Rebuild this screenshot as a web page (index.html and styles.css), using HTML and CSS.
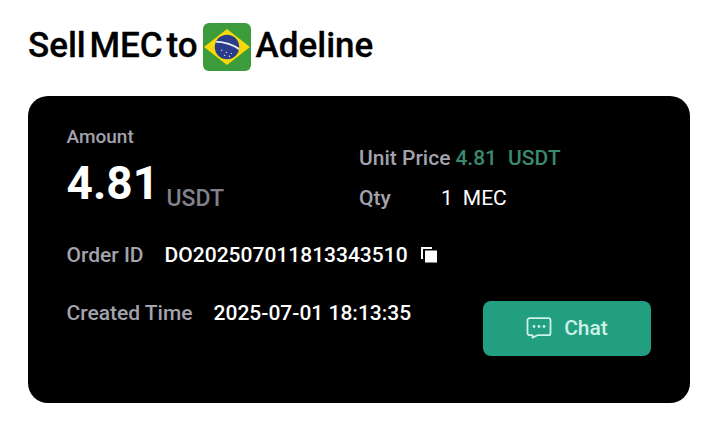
FILE: index.html
```html
<!DOCTYPE html>
<html lang="en">
<head>
<meta charset="utf-8">
<title>Sell MEC</title>
<link rel="stylesheet" href="styles.css">
</head>
<body>
<h1 class="title">
  <span class="title-text">Sell MEC to</span>
  <svg class="flag" viewBox="0 0 49 49" width="48" height="48" aria-hidden="true">
    <defs><clipPath id="globe"><circle cx="24.5" cy="24.5" r="12.5"/></clipPath></defs>
    <rect width="49" height="49" rx="6" fill="#3c9b3a"/>
    <path d="M1 24.5 24.5 6 48 24.5 24.5 43Z" fill="#f5d90a"/>
    <circle cx="24.5" cy="24.5" r="12.5" fill="#2a3c8c"/>
    <g clip-path="url(#globe)"><path d="M10 19C20 19 30 21 39 28" fill="none" stroke="#e8eef2" stroke-width="2"/></g>
    <g fill="#dfe6f2"><circle cx="19" cy="28" r=".7"/><circle cx="24" cy="30" r=".7"/><circle cx="29" cy="31" r=".7"/><circle cx="22" cy="33" r=".7"/><circle cx="27" cy="34" r=".7"/></g>
  </svg>
  <span class="title-text">Adeline</span>
</h1>
<main class="card">
  <div class="top">
    <div class="amount">
      <div class="label amount-label">Amount</div>
      <div class="amount-value"><span class="big">4.81</span><span class="unit">USDT</span></div>
    </div>
    <div class="price">
      <div class="price-row"><span class="label">Unit Price</span><span class="green">4.81</span><span class="green">USDT</span></div>
      <div class="qty-row"><span class="label qty-label">Qty</span><span>1</span><span>MEC</span></div>
    </div>
  </div>
  <div class="order">
    <span class="label">Order ID</span>
    <span class="value">DO202507011813343510</span>
    <svg class="copy" viewBox="0 0 16 16" width="16" height="16" aria-hidden="true">
      <path d="M0 0h11v2H2v10H0Z" fill="#fff"/>
      <rect x="4" y="3.5" width="12" height="12" fill="#fff"/>
    </svg>
  </div>
  <div class="bottom">
    <div class="created">
      <span class="label">Created Time</span>
      <span class="value">2025-07-01 18:13:35</span>
    </div>
    <button class="chat" type="button">
      <svg viewBox="0 0 26 22" width="26" height="22" aria-hidden="true">
        <path d="M3.5 1.2h19a2 2 0 0 1 2 2v13a2 2 0 0 1-2 2H11.5L6.5 20.6v-2.4h-3a2 2 0 0 1-2-2v-13a2 2 0 0 1 2-2Z" fill="none" stroke="#cdf1e6" stroke-width="1.8" stroke-linejoin="round"/>
        <circle cx="8" cy="9.5" r="1.4" fill="#cdf1e6"/><circle cx="13" cy="9.5" r="1.4" fill="#cdf1e6"/><circle cx="18" cy="9.5" r="1.4" fill="#cdf1e6"/>
      </svg>
      <span class="chat-text">Chat</span>
    </button>
  </div>
</main>
</body>
</html>
```

FILE: styles.css
```css
* { box-sizing: border-box; }
html, body { margin: 0; height: 100%; }
body {
  background: #fff;
  font-family: Roboto, "Liberation Sans", sans-serif;
  padding: 23px 29px 19px 28px;
  overflow: hidden;
}
.title {
  margin: 0 0 25px;
  height: 48px;
  display: flex;
  align-items: flex-start;
  gap: 5px;
  font-size: 35px;
  font-weight: 500;
  word-spacing: -5px;
  color: #000;
  -webkit-text-stroke: 0.3px #000;
}
.title-text { line-height: 45px; }
.flag { flex: none; }
.card {
  background: #000;
  border-radius: 20px;
  height: 307px;
  padding: 30px 39px 0 38.5px;
  color: #fff;
  font-size: 21px;
}
.label { color: #a3a3ad; font-weight: 500; }
.top { display: flex; height: 101px; }
.amount { width: 292.5px; }
.amount-label { font-size: 19px; line-height: 21px; }
.amount-value { display: flex; align-items: flex-end; gap: 7.5px; margin-top: 11px; height: 50px; }
.big { font-size: 46px; font-weight: 700; line-height: 50px; }
.unit { font-size: 23px; font-weight: 500; color: #82828d; line-height: 27px; margin-bottom: -4px; }
.price { padding-top: 20px; }
.price-row, .qty-row { display: flex; align-items: baseline; line-height: 24px; }
.price-row { gap: 5px; }
.price-row .green:last-child { margin-left: 6px; }
.green { color: #3a8a6e; font-weight: 500; }
.qty-row { margin-top: 16px; }
.qty-label { width: 82px; }
.qty-row span:last-child { margin-left: 10px; }
.order { display: flex; align-items: center; gap: 21px; height: 24px; margin-top: 16px; }
.value { font-weight: 500; }
.copy { flex: none; margin-left: -8px; }
.bottom { display: flex; justify-content: space-between; margin-top: 34px; }
.created { display: flex; gap: 21px; line-height: 24px; }
.chat {
  width: 168px;
  height: 55px;
  border: 0;
  border-radius: 8px;
  background: #229e80;
  color: #cdf1e6;
  font: 500 21px Roboto, sans-serif;
  display: flex;
  align-items: center;
  justify-content: center;
  gap: 12px;
  padding: 0 6px 2px 6px;
}
```
